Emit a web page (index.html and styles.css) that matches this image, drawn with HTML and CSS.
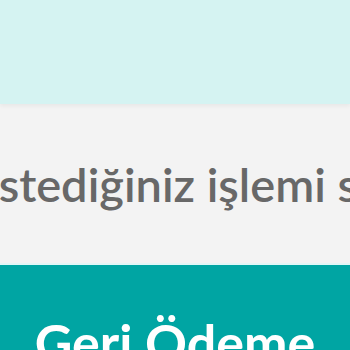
FILE: index.html
```html
<!DOCTYPE html>
<html lang="tr">
<head>
<meta charset="utf-8">
<link rel="stylesheet" href="styles.css">
</head>
<body>
<div class="screen">
  <div class="header"></div>
  <div class="prompt"><span class="prompt-text">istediğiniz işlemi seçiniz</span></div>
  <div class="action"><span class="action-text">Geri Ödeme</span></div>
</div>
</body>
</html>
```

FILE: styles.css
```css
html, body {
  margin: 0;
  padding: 0;
  width: 350px;
  height: 350px;
  overflow: hidden;
}
.screen {
  display: flex;
  flex-direction: column;
  width: 350px;
  height: 350px;
  overflow: hidden;
  font-family: Lato, "Noto Sans", sans-serif;
}
.header {
  height: 104px;
  flex: none;
  background: #d5f3f2;
  box-shadow: 0 2px 4px rgba(0,0,0,0.05);
  position: relative;
  z-index: 1;
}
.prompt {
  height: 159px;
  flex: none;
  background: #f3f3f3;
  display: flex;
  align-items: center;
  white-space: nowrap;
  overflow: hidden;
}
.prompt-text {
  margin-left: -13px;
  font-size: 47px;
  font-weight: 600;
  color: #686868;
}
.action {
  flex: 1;
  background: #00a5a3;
  border-top: 2px solid #e2f6f6;
  display: flex;
  justify-content: center;
  padding-top: 51px;
  white-space: nowrap;
}
.action-text {
  font-size: 52px;
  font-weight: 700;
  color: #ffffff;
  line-height: 1;
}
```
